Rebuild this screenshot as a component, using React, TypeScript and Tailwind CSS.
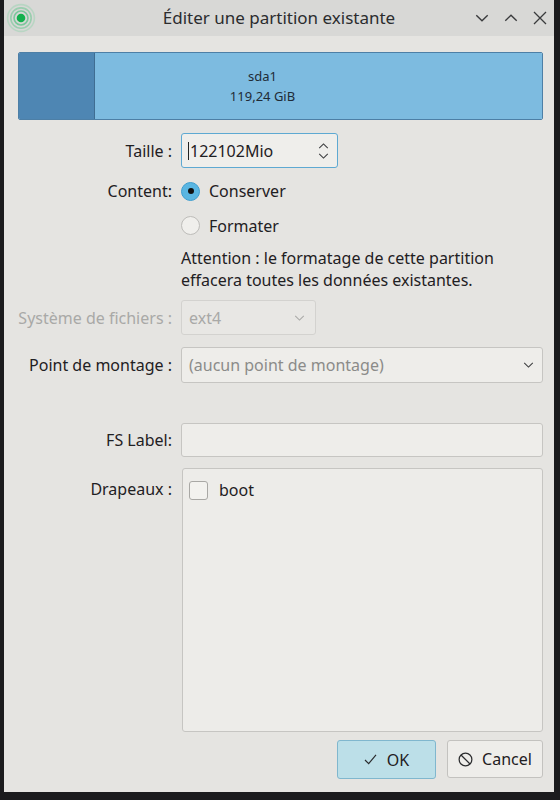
import React from "react";

function Chevron({ dir, className }: { dir: "up" | "down"; className?: string }) {
  return (
    <svg viewBox="0 0 12 7" className={className} fill="none" stroke="currentColor" strokeWidth="1.2">
      {dir === "down" ? <path d="M1 1l5 5 5-5" /> : <path d="M1 6l5-5 5 5" />}
    </svg>
  );
}

function AppIcon() {
  return (
    <svg viewBox="0 0 28 28" className="h-[30px] w-[30px]">
      <circle cx="14" cy="14" r="12.5" fill="none" stroke="#7fd0a0" strokeOpacity="0.35" strokeWidth="1.5" />
      <circle cx="14" cy="14" r="9.5" fill="none" stroke="#5cc488" strokeOpacity="0.5" strokeWidth="1.5" />
      <circle cx="14" cy="14" r="6.5" fill="none" stroke="#3dba74" strokeOpacity="0.6" strokeWidth="1.5" />
      <circle cx="14" cy="14" r="4" fill="#14b04e" />
    </svg>
  );
}

function Row({ label, muted, children, className }: { label: string; muted?: boolean; children: React.ReactNode; className?: string }) {
  return (
    <div className={`flex items-center ${className ?? ""}`}>
      <div className={`w-[154px] shrink-0 text-right ${muted ? "text-[#a9a9a7]" : "text-[#1f2023]"}`}>{label}</div>
      <div className="ml-[9px] flex-1">{children}</div>
    </div>
  );
}

export default function App() {
  return (
    <div className="h-[800px] w-[560px] overflow-hidden bg-[#1b1b1d] pb-[8px] pl-[4px] pr-[6px] font-['Noto_Sans',sans-serif] text-[16px] text-[#1f2023]">
      <div className="flex h-full flex-col bg-[#e5e4e1]">
        {/* Title bar */}
        <div className="grid h-[36px] shrink-0 grid-cols-[1fr_auto_1fr] items-center bg-[#d8d8d6]">
          <div className="pl-[2px]">
            <AppIcon />
          </div>
          <div className="text-[17px] text-[#2b2c2e]">Éditer une partition existante</div>
          <div className="flex items-center justify-end gap-[9px] pr-[4px] text-[#3a3b3d]">
            <div className="flex h-[20px] w-[20px] items-center justify-center">
              <Chevron dir="down" className="h-[8px] w-[14px]" />
            </div>
            <div className="flex h-[20px] w-[20px] items-center justify-center">
              <Chevron dir="up" className="h-[8px] w-[14px]" />
            </div>
            <div className="flex h-[20px] w-[20px] items-center justify-center">
              <svg viewBox="0 0 14 14" className="h-[14px] w-[14px]" stroke="currentColor" strokeWidth="1.3">
                <path d="M1 1l12 12M13 1L1 13" />
              </svg>
            </div>
          </div>
        </div>

        <div className="flex flex-1 flex-col pl-[14px] pr-[11px]">
          {/* Partition bar */}
          <div className="mt-[16px] flex h-[68px] overflow-hidden rounded-[2px] border border-[#4d7fa6]">
            <div className="w-[76px] border-r border-[#3f6d92] bg-[#4e86b3]" />
            <div className="flex flex-1 flex-col items-center justify-center bg-[#7dbbe0] pr-[112px] text-[13px] leading-[20px] text-[#1f2b36]">
              <div>sda1</div>
              <div>119,24 GiB</div>
            </div>
          </div>

          {/* Taille */}
          <Row label="Taille :" className="mt-[13px] h-[35px]">
            <div className="flex h-[35px] w-[157px] items-center rounded-[3px] border border-[#5ea9d2] bg-[#efeeeb] pl-[6px] pr-[8px]">
              <div className="h-[18px] w-px bg-[#222]" />
              <span className="ml-[1px] flex-1">122102Mio</span>
              <div className="flex flex-col gap-[4px] text-[#3b3c3e]">
                <Chevron dir="up" className="h-[6px] w-[11px]" />
                <Chevron dir="down" className="h-[6px] w-[11px]" />
              </div>
            </div>
          </Row>

          {/* Content */}
          <Row label="Content:" className="mt-[6px] h-[34px]">
            <div className="flex items-center">
              <div className="flex h-[19px] w-[19px] items-center justify-center rounded-full border border-[#3f9ecf] bg-[#5ab6e2]">
                <div className="h-[6px] w-[6px] rounded-full bg-[#111]" />
              </div>
              <span className="ml-[9px]">Conserver</span>
            </div>
          </Row>
          <Row label="" className="h-[35px]">
            <div className="flex items-center">
              <div className="h-[19px] w-[19px] rounded-full border border-[#bdbcb9] bg-[#f0efec]" />
              <span className="ml-[9px]">Formater</span>
            </div>
          </Row>
          <Row label="" className="mt-[4px]">
            <div className="leading-[22px]">
              Attention : le formatage de cette partition
              <br />
              effacera toutes les données existantes.
            </div>
          </Row>

          {/* Système de fichiers */}
          <Row label="Système de fichiers :" muted className="mt-[9px] h-[35px]">
            <div className="flex h-[35px] w-[135px] items-center rounded-[3px] border border-[#d3d2cf] bg-[#e8e7e4] pl-[7px] pr-[10px] text-[#a9a9a7]">
              <span className="flex-1">ext4</span>
              <Chevron dir="down" className="h-[6px] w-[11px]" />
            </div>
          </Row>

          {/* Point de montage */}
          <Row label="Point de montage :" className="mt-[12px] h-[36px]">
            <div className="flex h-[36px] items-center rounded-[3px] border border-[#c6c5c2] bg-[#eeedea] pl-[7px] pr-[8px]">
              <span className="flex-1 text-[#8b8b89]">(aucun point de montage)</span>
              <Chevron dir="down" className="h-[6px] w-[11px] text-[#3b3c3e]" />
            </div>
          </Row>

          {/* FS Label */}
          <Row label="FS Label:" className="mt-[40px] h-[34px]">
            <div className="h-[34px] rounded-[3px] border border-[#c6c5c2] bg-[#eeedea]" />
          </Row>

          {/* Drapeaux */}
          <div className="mt-[11px] flex">
            <div className="w-[154px] shrink-0 pt-[10px] text-right leading-[22px]">Drapeaux :</div>
            <div className="ml-[10px] h-[264px] flex-1 rounded-[3px] border border-[#c6c5c2] bg-[#edece9] px-[6px] pt-[9px]">
              <div className="flex items-center">
                <div className="h-[19px] w-[19px] rounded-[3px] border border-[#a9a8a5] bg-[#f3f2ef]" />
                <span className="ml-[11px]">boot</span>
              </div>
            </div>
          </div>

          {/* Buttons */}
          <div className="mt-[8px] flex justify-end gap-[11px]">
            <div className="flex h-[39px] w-[99px] items-center justify-center gap-[10px] rounded-[3px] border border-[#80b7ce] bg-[#bcdfe8]">
              <svg viewBox="0 0 14 12" className="h-[11px] w-[13px]" fill="none" stroke="#2b2c2e" strokeWidth="1.3">
                <path d="M1 6.5l4 4L13 1" />
              </svg>
              <span>OK</span>
            </div>
            <div className="flex h-[38px] w-[96px] items-center justify-center gap-[9px] rounded-[3px] border border-[#c3c2bf] bg-[#eeedea]">
              <svg viewBox="0 0 16 16" className="h-[15px] w-[15px]" fill="none" stroke="#2b2c2e" strokeWidth="1.3">
                <circle cx="8" cy="8" r="6.8" />
                <path d="M3.2 3.2l9.6 9.6" />
              </svg>
              <span>Cancel</span>
            </div>
          </div>
        </div>
      </div>
    </div>
  );
}
